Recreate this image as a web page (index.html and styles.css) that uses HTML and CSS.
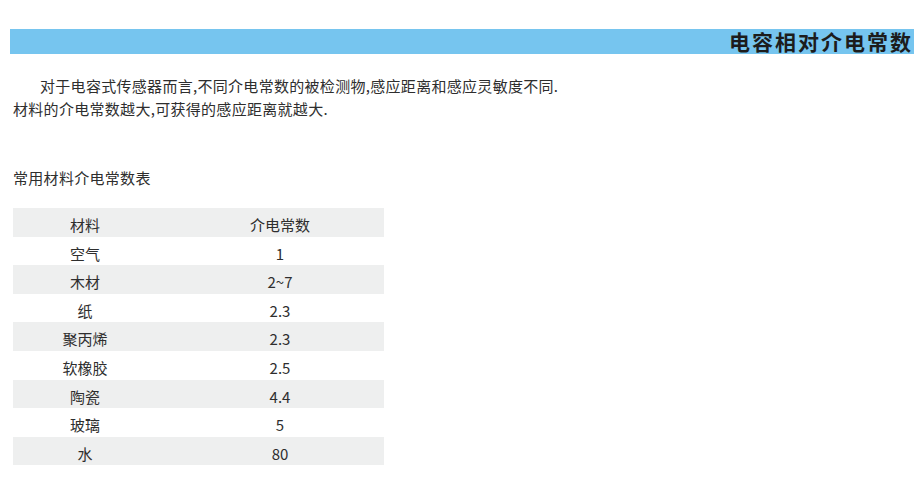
FILE: index.html
```html
<!DOCTYPE html>
<html lang="zh-CN">
<head>
<meta charset="utf-8">
<title>电容相对介电常数</title>
<link rel="stylesheet" href="styles.css">
</head>
<body>
<div class="page">
  <div class="title-bar">电容相对介电常数</div>
  <div class="intro">
    <p class="indent">对于电容式传感器而言,不同介电常数的被检测物,感应距离和感应灵敏度不同.</p>
    <p>材料的介电常数越大,可获得的感应距离就越大.</p>
  </div>
  <p class="caption">常用材料介电常数表</p>
  <div class="table">
    <div class="row shade"><span class="c1">材料</span><span class="c2">介电常数</span></div>
    <div class="row"><span class="c1">空气</span><span class="c2">1</span></div>
    <div class="row shade"><span class="c1">木材</span><span class="c2">2~7</span></div>
    <div class="row"><span class="c1">纸</span><span class="c2">2.3</span></div>
    <div class="row shade"><span class="c1">聚丙烯</span><span class="c2">2.3</span></div>
    <div class="row"><span class="c1">软橡胶</span><span class="c2">2.5</span></div>
    <div class="row shade"><span class="c1">陶瓷</span><span class="c2">4.4</span></div>
    <div class="row"><span class="c1">玻璃</span><span class="c2">5</span></div>
    <div class="row shade"><span class="c1">水</span><span class="c2">80</span></div>
  </div>
</div>
</body>
</html>
```
FILE: styles.css
```css
html, body {
  margin: 0;
  padding: 0;
  background: #ffffff;
}
body {
  font-family: "Noto Sans CJK SC", "Noto Sans", sans-serif;
  color: #2e2e2e;
}
.page {
  padding: 29px 7px 0 10px;
}
.title-bar {
  height: 25px;
  line-height: 25px;
  background: #76c5ef;
  text-align: right;
  font-size: 21px;
  font-weight: 700;
  letter-spacing: 2px;
  color: #1c1c1c;
  padding-right: 1px;
}
.intro {
  margin-top: 19.5px;
  padding-left: 3px;
  font-size: 15px;
  line-height: 23px;
  letter-spacing: 0.3px;
}
.intro p {
  margin: 0;
}
.intro .indent {
  text-indent: 27px;
}
.caption {
  margin: 46px 0 0 3px;
  font-size: 15px;
  line-height: 23px;
  letter-spacing: 0.3px;
}
.table {
  margin: 19.5px 0 0 3px;
  width: 371px;
  font-size: 15px;
}
.row {
  display: grid;
  grid-template-columns: 144px 1fr;
  height: 28.6px;
  box-sizing: border-box;
  padding-top: 7px;
  line-height: 20px;
}
.row.shade {
  background: #eeefef;
}
.c1 {
  text-align: center;
}
.c2 {
  text-align: center;
  padding-left: 19px;
}
```
